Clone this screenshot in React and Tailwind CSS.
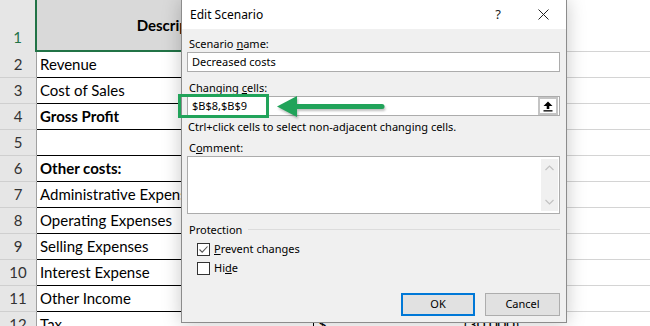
import React from "react";

const rows = [
  { n: 2, t: "Revenue" },
  { n: 3, t: "Cost of Sales" },
  { n: 4, t: "Gross Profit", b: true },
  { n: 5, t: "" },
  { n: 6, t: "Other costs:", b: true },
  { n: 7, t: "Administrative Expenses" },
  { n: 8, t: "Operating Expenses" },
  { n: 9, t: "Selling Expenses" },
  { n: 10, t: "Interest Expense" },
  { n: 11, t: "Other Income" },
  { n: 12, t: "Tax", c: "$", d: "(30,000)" },
];

function Checkbox({ checked }) {
  return (
    <div className="w-[13px] h-[13px] border border-[#333] bg-white flex items-center justify-center">
      {checked && (
        <svg width="11" height="11" viewBox="0 0 11 11">
          <path d="M1.5 5.5 L4.2 8.2 L9.5 2.5" fill="none" stroke="#555" strokeWidth="1.1" />
        </svg>
      )}
    </div>
  );
}

export default function App() {
  return (
    <div className="relative w-[650px] h-[326px] overflow-hidden bg-white">
      {/* Spreadsheet */}
      <div className="flex flex-col font-['Lato',sans-serif] text-[15px] text-black">
        <div className="flex h-[52px]">
          <div className="w-[35px] bg-[#e6e6e6] flex items-end justify-center pb-[4px] text-[#217346]">1</div>
          <div className="w-[279px] bg-[#d9d9d9] border-l-2 border-b-2 border-[#217346] flex items-center justify-center font-bold">
            Description
          </div>
          <div className="flex-1 border-b border-[#d4d4d4]" />
        </div>
        {rows.map((r) => (
          <div key={r.n} className="flex h-[26px]">
            <div className="w-[37px] bg-[#e6e6e6] border-r border-b border-r-[#a0a0a0] border-b-[#cfcfcf] flex items-center justify-center text-[#333]">
              {r.n}
            </div>
            <div className={"w-[277px] border-b border-r border-black flex items-center pl-[3px] whitespace-nowrap overflow-hidden " + (r.b ? "font-bold" : "")}>
              {r.t}
            </div>
            <div className="w-[209px] border-b border-[#d4d4d4] flex items-center justify-between px-[4px]">
              <span>{r.c}</span>
              <span>{r.d}</span>
            </div>
            <div className="flex-1 border-b border-[#d4d4d4]" />
          </div>
        ))}
      </div>

      {/* Dialog */}
      <div className="absolute left-[181px] top-0 w-[386px] h-[323px] bg-[#f0f0f0] border border-t-0 border-[#8c8c8c] shadow-[0_0_18px_rgba(0,0,0,0.22)] font-['Noto_Sans',sans-serif] text-[11px] text-black flex flex-col">
        <div className="h-[29px] bg-white flex items-center pl-[8px] pr-[13px]">
          <div className="flex-1 text-[12px]">Edit Scenario</div>
          <div className="w-[20px] flex justify-center text-[13px] text-[#222]">?</div>
          <div className="w-[25px]" />
          <div className="w-[20px] flex justify-center">
            <svg width="11" height="11" viewBox="0 0 11 11">
              <path d="M0.5 0.5 L10.5 10.5 M10.5 0.5 L0.5 10.5" stroke="#222" strokeWidth="1" />
            </svg>
          </div>
        </div>

        <div className="flex flex-col pl-[5px]">
          <div className="mt-[7px] h-[15px] leading-[15px] pl-[2px]">
            Scenario <span className="underline">n</span>ame:
          </div>
          <div className="mt-[1px] w-[373px] h-[20px] bg-white border border-[#acacac] flex items-center pl-[4px]">
            Decreased costs
          </div>

          <div className="mt-[8px] h-[15px] leading-[15px] pl-[2px]">
            Changing <span className="underline">c</span>ells:
          </div>
          <div className="mt-[1px] w-[373px] h-[20px] bg-white border border-[#acacac] flex items-center pl-[4px]">
            <div className="flex-1">$B$8,$B$9</div>
            <div className="w-[20px] h-[18px] border-2 border-[#c4c4c4] bg-white flex items-center justify-center mr-[1px]">
              <svg width="10" height="11" viewBox="0 0 10 11">
                <path d="M5 0.5 L9.5 5 L6.3 5 L6.3 8 L3.7 8 L3.7 5 L0.5 5 Z" fill="#000" />
                <rect x="0.5" y="9.2" width="9" height="1.3" fill="#000" />
              </svg>
            </div>
          </div>

          <div className="mt-[3px] h-[15px] leading-[15px] pl-[1px]">
            Ctrl+click cells to select non-adjacent changing cells.
          </div>

          <div className="mt-[6px] h-[15px] leading-[15px] pl-[2px]">
            C<span className="underline">o</span>mment:
          </div>
          <div className="mt-[1px] w-[373px] h-[58px] bg-white border border-[#acacac] flex justify-end py-[2px] pr-[1px]">
            <div className="w-[17px] bg-[#f0f0f0] flex flex-col items-center justify-between py-[6px]">
              <svg width="9" height="6" viewBox="0 0 9 6">
                <path d="M0.5 5 L4.5 1 L8.5 5" fill="none" stroke="#c2c2c2" strokeWidth="1.2" />
              </svg>
              <svg width="9" height="6" viewBox="0 0 9 6">
                <path d="M0.5 1 L4.5 5 L8.5 1" fill="none" stroke="#c2c2c2" strokeWidth="1.2" />
              </svg>
            </div>
          </div>

          <div className="mt-[8px] h-[15px] flex items-center pl-[2px]">
            <span className="leading-[15px]">Protection</span>
            <div className="flex-1 h-px bg-[#dcdcdc] ml-[6px] mr-[6px]" />
          </div>

          <div className="mt-[3px] h-[19px] flex items-center pl-[10px] gap-[4px]">
            <Checkbox checked />
            <span>
              <span className="underline">P</span>revent changes
            </span>
          </div>
          <div className="h-[19px] flex items-center pl-[10px] gap-[4px]">
            <Checkbox />
            <span>
              Hi<span className="underline">d</span>e
            </span>
          </div>

          <div className="mt-[15px] w-[373px] flex justify-end gap-[10px]">
            <div className="w-[74px] h-[23px] border-2 border-[#0078d7] bg-[#e1e1e1] flex items-center justify-center">OK</div>
            <div className="w-[75px] h-[23px] border border-[#adadad] bg-[#e1e1e1] flex items-center justify-center">Cancel</div>
          </div>
        </div>
      </div>

      {/* Annotation: green box and arrow */}
      <div className="absolute left-[178px] top-[94px] w-[91px] h-[24px] border-[3px] border-[#21a35a]" />
      <svg className="absolute left-[272px] top-[92px] drop-shadow-[1px_2px_1px_rgba(0,0,0,0.25)]" width="120" height="30" viewBox="0 0 120 30">
        <path d="M5 14.5 L25 4 L25 25 Z" fill="#21a35a" />
        <line x1="23" y1="14.5" x2="110" y2="14.5" stroke="#21a35a" strokeWidth="5" strokeLinecap="round" />
      </svg>
    </div>
  );
}
